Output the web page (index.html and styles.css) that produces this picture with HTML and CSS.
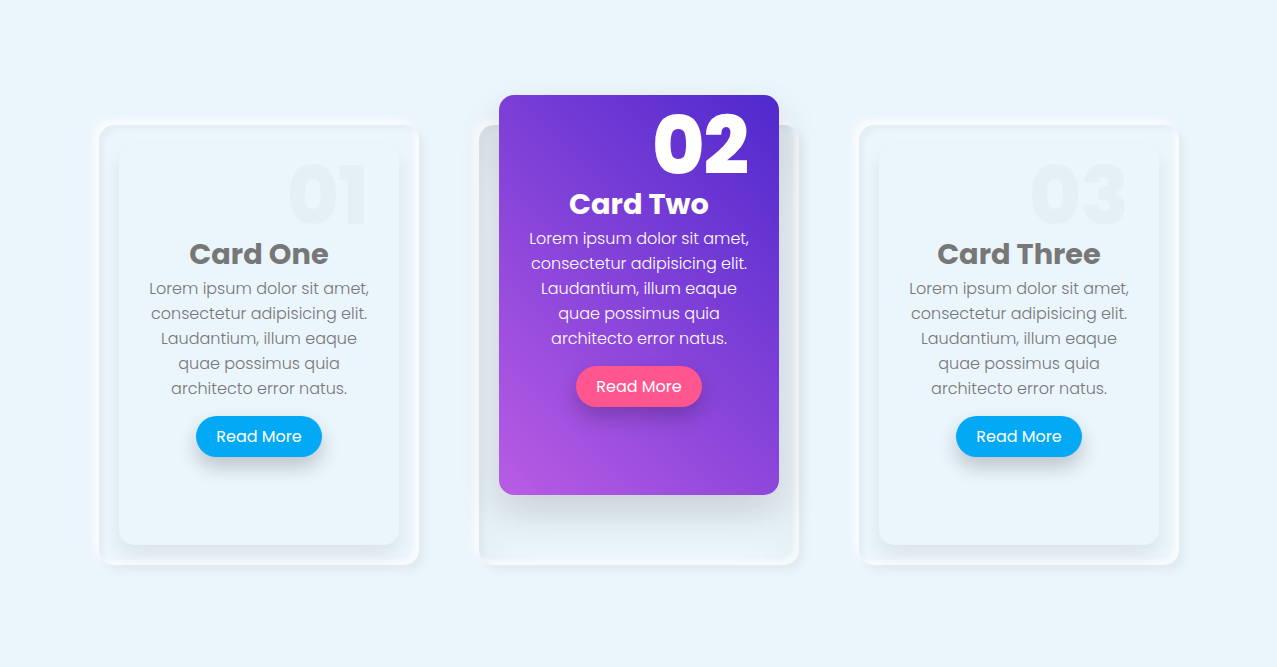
FILE: index.html
```
<!DOCTYPE html>
<html lang="en">
<head>
<meta charset="utf-8">
<title>Cards</title>
<link rel="stylesheet" href="styles.css">
</head>
<body>
<main class="cards">
  <div class="slot">
    <div class="card">
      <h2 class="num">01</h2>
      <div class="body">
        <h3 class="title">Card One</h3>
        <p class="text">Lorem ipsum dolor sit amet, consectetur adipisicing elit. Laudantium, illum eaque quae possimus quia architecto error natus.</p>
        <a class="btn" href="#">Read More</a>
      </div>
    </div>
  </div>
  <div class="slot slot-active">
    <div class="card card-active">
      <h2 class="num">02</h2>
      <div class="body">
        <h3 class="title">Card Two</h3>
        <p class="text">Lorem ipsum dolor sit amet, consectetur adipisicing elit. Laudantium, illum eaque quae possimus quia architecto error natus.</p>
        <a class="btn" href="#">Read More</a>
      </div>
    </div>
  </div>
  <div class="slot">
    <div class="card">
      <h2 class="num">03</h2>
      <div class="body">
        <h3 class="title">Card Three</h3>
        <p class="text">Lorem ipsum dolor sit amet, consectetur adipisicing elit. Laudantium, illum eaque quae possimus quia architecto error natus.</p>
        <a class="btn" href="#">Read More</a>
      </div>
    </div>
  </div>
</main>
</body>
</html>
```
FILE: styles.css
```
* { box-sizing: border-box; }
html, body { margin: 0; padding: 0; }
body {
  background: #ebf5fc;
  font-family: "Poppins", "Open Sans", sans-serif;
  height: 667px;
  overflow: hidden;
}
.cards {
  display: flex;
  justify-content: center;
  gap: 60px;
  padding-top: 125px;
  padding-left: 1px;
}
.slot {
  width: 320px;
  height: 440px;
  padding: 20px;
  border-radius: 15px;
  box-shadow: inset -5px -5px 5px rgba(255,255,255,0.6),
              inset 5px 5px 5px rgba(0,0,0,0.03),
              -5px -5px 10px rgba(255,255,255,0.8),
              5px 5px 10px rgba(0,0,0,0.05);
}
.slot-active {
  box-shadow: inset -5px -5px 5px rgba(255,255,255,0.6),
              inset 5px 5px 5px rgba(0,0,0,0.03),
              -5px -5px 10px rgba(255,255,255,0.8),
              5px 5px 10px rgba(0,0,0,0.05),
              inset 0 40px 60px rgba(0,0,0,0.05);
}
.card {
  position: relative;
  height: 100%;
  border-radius: 15px;
  background: #ebf5fc;
  box-shadow: 0 10px 20px rgba(0,0,0,0.07);
  display: flex;
  align-items: center;
  justify-content: center;
  padding-bottom: 2px;
}
.card-active {
  transform: translateY(-50px);
  background: linear-gradient(45deg, #b95ce4, #4f29cd);
  box-shadow: 0 20px 40px rgba(0,0,0,0.15);
}
.num {
  position: absolute;
  top: 11px;
  right: 31px;
  margin: 0;
  font-size: 80px;
  font-weight: 800;
  line-height: 1;
  color: rgba(0,0,0,0.025);
  letter-spacing: -1px;
}
.card-active .num { color: #fff; }
.body {
  width: 240px;
  text-align: center;
}
.title {
  margin: 0;
  font-size: 28.8px;
  font-weight: 700;
  line-height: 44px;
  color: #777;
}
.text {
  margin: 0;
  font-size: 16px;
  font-weight: 300;
  line-height: 25px;
  color: #777;
}
.card-active .title, .card-active .text { color: #fff; }
.btn {
  display: inline-block;
  margin-top: 15px;
  height: 41px;
  line-height: 41px;
  padding: 0 20px;
  border-radius: 21px;
  background: #03a9f4;
  color: #fff;
  text-decoration: none;
  font-size: 16px;
  font-weight: 400;
  box-shadow: 0 10px 20px rgba(0,0,0,0.2);
}
.card-active .btn { background: #ff568f; }
```
